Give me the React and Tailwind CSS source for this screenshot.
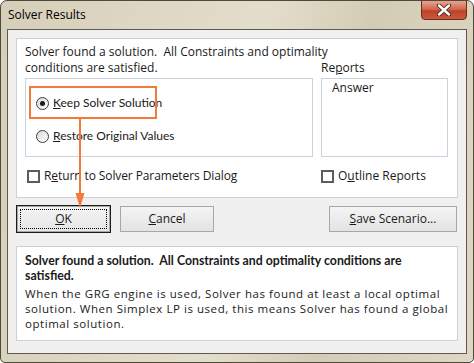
import React from 'react';

const font = { fontFamily: '"Open Sans", "Noto Sans", sans-serif' };
const narrow = { fontFamily: 'Lato, "Open Sans", sans-serif' };

function Radio({ checked }) {
  return (
    <span className="relative flex h-[13px] w-[13px] shrink-0 items-center justify-center rounded-full border border-[#3c3c3c] bg-[linear-gradient(135deg,#d8d8d8,#ffffff)]">
      {checked && <span className="h-[5px] w-[5px] rounded-full bg-[#1a1a1a]" />}
    </span>
  );
}

function Checkbox() {
  return <span className="h-[13px] w-[13px] shrink-0 border-2 border-[#5c5c5c] bg-white" />;
}

function Button({ children, className = '', isDefault = false }) {
  if (isDefault) {
    return (
      <div className={`flex h-[28px] border border-[#1b1b1b] ${className}`}>
        <div className="flex flex-1 items-center justify-center border border-[#a7a7a7] bg-[linear-gradient(#f4f4f4,#e6e6e6)] p-[2px]">
          <div className="flex h-full w-full items-center justify-center border border-dotted border-black">
            {children}
          </div>
        </div>
      </div>
    );
  }
  return (
    <div className={`mt-[1px] flex h-[26px] items-center justify-center border border-[#a7a7a7] bg-[linear-gradient(#f4f4f4,#e3e3e3)] ${className}`}>
      {children}
    </div>
  );
}

export default function App() {
  return (
    <div
      className="relative h-[363px] w-[474px] overflow-hidden rounded-t-[7px] rounded-b-[5px] border border-[#4d493d] bg-[linear-gradient(100deg,#d5ceb8_0%,#ddd6c2_25%,#e3ddcb_50%,#d3ccb5_70%,#ddd7c4_100%)] text-[12px] text-[#1a1a1a]"
      style={font}
    >
      {/* title bar */}
      <div className="flex h-[28px] items-center pl-[7px] pb-[1px] text-[12px] text-black">Solver Results</div>
      <div className="absolute right-[6px] top-[-1px] flex h-[20px] w-[46px] items-center justify-center rounded-b-[4px] border border-[#6f2a1c] bg-[linear-gradient(#e8a391_0%,#d26a52_45%,#bf4128_55%,#c85a3e_100%)]">
        <svg width="16" height="12" viewBox="0 0 16 12">
          <path d="M3 1.5 L13 10.5 M13 1.5 L3 10.5" stroke="#4b2218" strokeWidth="4.2" strokeLinecap="round" />
          <path d="M3 1.5 L13 10.5 M13 1.5 L3 10.5" stroke="#ffffff" strokeWidth="2.4" strokeLinecap="round" />
        </svg>
      </div>

      {/* client area */}
      <div className="mx-[6px] flex h-[325px] flex-col border border-[#5d5a50] bg-[#f0f0f0] px-[8px] pt-[8px]">
        {/* upper panel */}
        <div className="flex h-[160px] flex-col border border-[#c7d2dc] bg-white pl-[8px] pt-[5px]">
          <div className="leading-[16px]">
            Solver found a solution.&nbsp; All Constraints and optimality
            <br />
            conditions are satisfied.
          </div>
          <div className="flex gap-[8px]">
            <div className="relative mt-[2px] flex h-[79px] w-[288px] flex-col border border-[#c7d2dc] pl-[10px]">
              <div className="mt-[16px] flex items-center gap-[4px] text-[12px] leading-[16px]" style={narrow}>
                <Radio checked />
                <span>
                  <u>K</u>eep Solver Solution
                </span>
              </div>
              <div className="mt-[17px] flex items-center gap-[4px] text-[12px] leading-[16px]" style={narrow}>
                <Radio />
                <span>
                  <u>R</u>estore Original Values
                </span>
              </div>
              <div className="absolute left-[3px] top-[7px] h-[33px] w-[128px] border-2 border-[#f47a3a]" />
            </div>
            <div className="mt-[-16px] flex flex-col">
              <div className="leading-[16px]">
                Re<u>p</u>orts
              </div>
              <div className="mt-[2px] h-[79px] w-[127px] border border-[#c7d2dc] pl-[10px] pt-[1px] leading-[16px]">
                Answer
              </div>
            </div>
          </div>
          <div className="mt-[11px] flex">
            <div className="flex w-[296px] items-center gap-[4px] pl-[2px] leading-[16px] tracking-[-0.1px]">
              <Checkbox />
              <span>
                R<u>e</u>turn to Solver Parameters Dialog
              </span>
            </div>
            <div className="flex items-center gap-[4px] leading-[16px]">
              <Checkbox />
              <span>
                O<u>u</u>tline Reports
              </span>
            </div>
          </div>
        </div>

        {/* buttons */}
        <div className="mt-[7px] flex h-[28px]">
          <Button isDefault className="w-[95px]">
            <span>
              <u>O</u>K
            </span>
          </Button>
          <Button className="ml-[9px] w-[94px]">
            <span>
              <u>C</u>ancel
            </span>
          </Button>
          <Button className="ml-auto mr-[1px] w-[128px]">
            <span>
              <u>S</u>ave Scenario...
            </span>
          </Button>
        </div>

        {/* message panel */}
        <div className="mt-[13px] h-[95px] border border-[#c7d2dc] bg-white pl-[8px] pt-[6px]">
          <div className="text-[12.3px] font-bold leading-[15px]" style={narrow}>
            Solver found a solution.&nbsp; All Constraints and optimality conditions are
            <br />
            satisfied.
          </div>
          <div className="mt-[3px] text-[11.5px] leading-[15px] tracking-[0.55px]">
            When the GRG engine is used, Solver has found at least a local optimal
            <br />
            solution. When Simplex LP is used, this means Solver has found a global
            <br />
            optimal solution.
          </div>
        </div>
      </div>

      {/* annotation arrow */}
      <svg className="absolute left-[73px] top-[118px]" width="12" height="90" viewBox="0 0 12 90">
        <path d="M6 0 L6 76" stroke="#f47a3a" strokeWidth="2" />
        <path d="M1.5 74 L10.5 74 L6 89 Z" fill="#f47a3a" />
      </svg>
    </div>
  );
}
